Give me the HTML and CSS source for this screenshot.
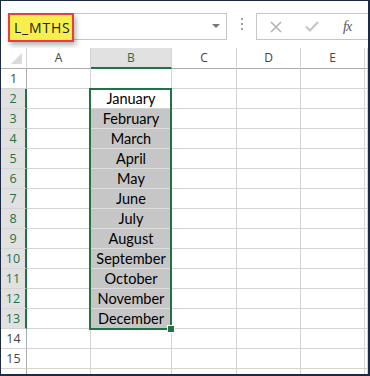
FILE: index.html
```html
<!DOCTYPE html>
<html>
<head>
<meta charset="utf-8">
<link rel="stylesheet" href="styles.css">
</head>
<body>
<div class="frame">
  <div class="fbar">
    <div class="namebox">
      <span class="nb-arrow"></span>
      <div class="highlight">L_MTHS</div>
    </div>
    <div class="dots"><i></i><i></i><i></i></div>
    <div class="fbox">
      <svg class="ic-x" width="12" height="12" viewBox="0 0 12 12"><path d="M1 1L11 11M11 1L1 11" stroke="#b4b4b4" stroke-width="1.6" fill="none"/></svg>
      <svg class="ic-ok" width="14" height="11" viewBox="0 0 14 11"><path d="M1 5.5L5 9.5L13 1" stroke="#c4c4c4" stroke-width="2" fill="none"/></svg>
      <span class="ic-fx">fx</span>
    </div>
  </div>
  <div class="grid">
    <div class="hd corner"><span class="tri"></span></div>
    <div class="hd">A</div><div class="hd sel">B</div><div class="hd">C</div><div class="hd">D</div><div class="hd">E</div><div class="hd"></div>

    <div class="rh">1</div><div class="c"></div><div class="c"></div><div class="c"></div><div class="c"></div><div class="c"></div><div class="c"></div>
    <div class="rh sel">2</div><div class="c"></div><div class="c t">January</div><div class="c"></div><div class="c"></div><div class="c"></div><div class="c"></div>
    <div class="rh sel">3</div><div class="c"></div><div class="c t s">February</div><div class="c"></div><div class="c"></div><div class="c"></div><div class="c"></div>
    <div class="rh sel">4</div><div class="c"></div><div class="c t s">March</div><div class="c"></div><div class="c"></div><div class="c"></div><div class="c"></div>
    <div class="rh sel">5</div><div class="c"></div><div class="c t s">April</div><div class="c"></div><div class="c"></div><div class="c"></div><div class="c"></div>
    <div class="rh sel">6</div><div class="c"></div><div class="c t s">May</div><div class="c"></div><div class="c"></div><div class="c"></div><div class="c"></div>
    <div class="rh sel">7</div><div class="c"></div><div class="c t s">June</div><div class="c"></div><div class="c"></div><div class="c"></div><div class="c"></div>
    <div class="rh sel">8</div><div class="c"></div><div class="c t s">July</div><div class="c"></div><div class="c"></div><div class="c"></div><div class="c"></div>
    <div class="rh sel">9</div><div class="c"></div><div class="c t s">August</div><div class="c"></div><div class="c"></div><div class="c"></div><div class="c"></div>
    <div class="rh sel">10</div><div class="c"></div><div class="c t s">September</div><div class="c"></div><div class="c"></div><div class="c"></div><div class="c"></div>
    <div class="rh sel">11</div><div class="c"></div><div class="c t s">October</div><div class="c"></div><div class="c"></div><div class="c"></div><div class="c"></div>
    <div class="rh sel">12</div><div class="c"></div><div class="c t s">November</div><div class="c"></div><div class="c"></div><div class="c"></div><div class="c"></div>
    <div class="rh sel">13</div><div class="c"></div><div class="c t s">December</div><div class="c"></div><div class="c"></div><div class="c"></div><div class="c"></div>
    <div class="rh">14</div><div class="c"></div><div class="c"></div><div class="c"></div><div class="c"></div><div class="c"></div><div class="c"></div>
    <div class="rh">15</div><div class="c"></div><div class="c"></div><div class="c"></div><div class="c"></div><div class="c"></div><div class="c"></div>
    <div class="rh"></div><div class="c"></div><div class="c"></div><div class="c"></div><div class="c"></div><div class="c"></div><div class="c"></div>

    <div class="selbox"><span class="handle"></span></div>
  </div>
</div>
</body>
</html>
```

FILE: styles.css
```css
html, body {
  margin: 0;
  padding: 0;
  background: #fff;
}
.frame {
  width: 370px;
  height: 376px;
  box-sizing: border-box;
  border-style: solid;
  border-color: #1c2a43;
  border-width: 1px 2px 2px 1px;
  overflow: hidden;
  background: #fff;
  font-family: "Open Sans", "Noto Sans", sans-serif;
}
.fbar {
  height: 47px;
  box-sizing: border-box;
  display: flex;
  align-items: flex-start;
  padding-top: 12px;
  padding-left: 7px;
  background: #fff;
}
.namebox {
  position: relative;
  width: 219px;
  height: 27px;
  box-sizing: border-box;
  border: 1px solid #c6c6c6;
  background: #fff;
}
.nb-arrow {
  position: absolute;
  right: 6px;
  top: 10px;
  width: 0;
  height: 0;
  border-left: 4px solid transparent;
  border-right: 4px solid transparent;
  border-top: 4px solid #777;
}
.highlight {
  position: absolute;
  left: -1px;
  top: -1px;
  width: 66px;
  height: 29px;
  box-sizing: border-box;
  border: 2px solid #e5403f;
  background: #f7ef4e;
  box-shadow: 2px 3px 5px rgba(0, 0, 0, 0.3);
  font-size: 14px;
  line-height: 25px;
  padding-left: 4px;
  color: #222;
  letter-spacing: 0.8px;
}
.dots {
  width: 29px;
  display: flex;
  flex-direction: column;
  align-items: center;
  gap: 3px;
  padding-top: 5px;
}
.dots i {
  display: block;
  width: 2px;
  height: 2px;
  background: #a0a0a0;
}
.fbox {
  flex: 1;
  height: 27px;
  box-sizing: border-box;
  border: 1px solid #c6c6c6;
  border-right: none;
  display: flex;
  align-items: center;
  padding-left: 13px;
}
.ic-x { margin-right: 23px; }
.ic-ok { margin-right: 24px; }
.ic-fx {
  font-family: "Liberation Serif", "DejaVu Serif", serif;
  font-style: italic;
  font-size: 14px;
  color: #555;
  letter-spacing: -1px;
}
.grid {
  position: relative;
  display: grid;
  grid-template-columns: 26px 64px 81px 65px 64px 64px 3px;
  grid-template-rows: 21px;
  grid-auto-rows: 20px;
}
.grid > div {
  box-sizing: border-box;
  border-right: 1px solid #d4d4d4;
  border-bottom: 1px solid #d4d4d4;
}
.hd {
  border-bottom-color: #ababab !important;
  background: #fff;
  font-size: 12px;
  color: #444;
  text-align: center;
  line-height: 20px;
}
.hd.sel {
  background: #e1e1e1;
  color: #217346;
  border-bottom: 2px solid #217346 !important;
}
.corner {
  position: relative;
}
.tri {
  position: absolute;
  right: 4px;
  bottom: 4px;
  width: 0;
  height: 0;
  border-left: 11px solid transparent;
  border-bottom: 11px solid #dadada;
}
.rh {
  border-right-color: #ababab !important;
  font-size: 12.5px;
  color: #444;
  text-align: center;
  line-height: 19px;
}
.rh.sel {
  background: #e1e1e1;
  color: #217346;
  border-right: 2px solid #217346 !important;
}
.t {
  font-family: "Lato", "Open Sans", sans-serif;
  font-size: 14.5px;
  color: #000;
  text-align: center;
  line-height: 20px;
}
.s {
  background: #c6c6c6;
  border-bottom-color: #dedede !important;
}
.selbox {
  position: absolute;
  left: 88px;
  top: 40px;
  width: 83px;
  height: 242px;
  box-sizing: border-box;
  border: 2px solid #217346 !important;
  pointer-events: none;
}
.handle {
  position: absolute;
  right: -5px;
  bottom: -5px;
  width: 6px;
  height: 6px;
  background: #217346;
  border: 1px solid #fff;
}
```
